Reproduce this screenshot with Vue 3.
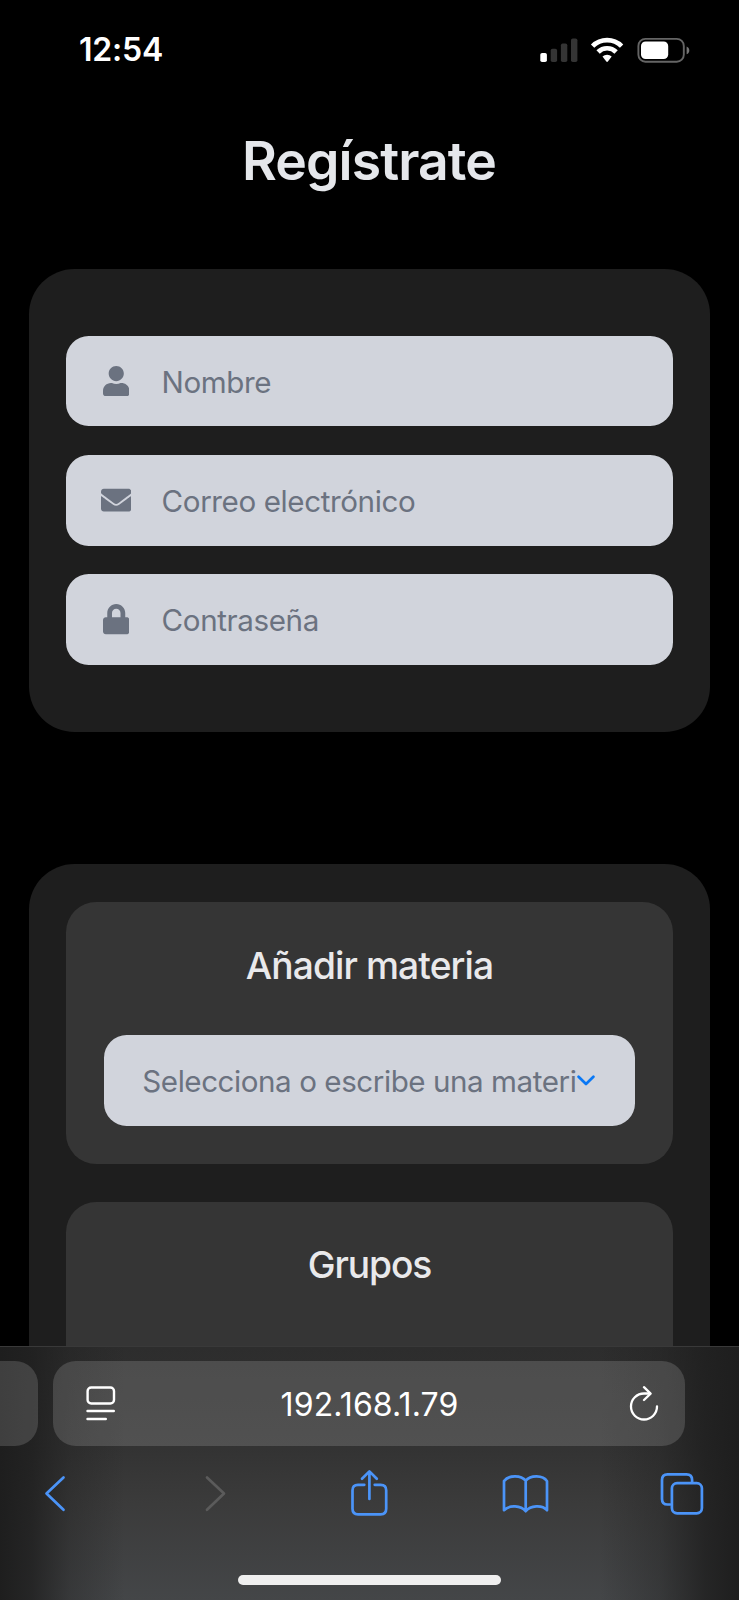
<script setup>
const fields = [
  {
    label: 'Nombre',
    width: 26.5,
    viewBox: '0 0 448 512',
    path: 'M224 256c70.7 0 128-57.3 128-128S294.7 0 224 0 96 57.3 96 128s57.3 128 128 128zm89.6 32h-16.7c-22.2 10.2-46.9 16-72.9 16s-50.6-5.8-72.9-16h-16.7C60.2 288 0 348.2 0 422.4V464c0 26.5 21.5 48 48 48h352c26.5 0 48-21.5 48-48v-41.6c0-74.2-60.2-134.4-134.4-134.4z',
  },
  {
    label: 'Correo electrónico',
    width: 30.3,
    viewBox: '0 0 512 512',
    path: 'M502.3 190.8c3.9-3.1 9.7-.2 9.7 4.7V400c0 26.5-21.5 48-48 48H48c-26.5 0-48-21.5-48-48V195.6c0-5 5.7-7.8 9.7-4.7 22.4 17.4 52.1 39.5 154.1 113.6 21.1 15.4 56.7 47.8 92.2 47.6 35.7.3 72-32.8 92.3-47.6 102-74.1 131.6-96.3 154-113.7zM256 320c23.2.4 56.6-29.2 73.4-41.4 132.7-96.3 142.8-104.7 173.4-128.7 5.8-4.5 9.2-11.5 9.2-18.9v-19c0-26.5-21.5-48-48-48H48c-26.5 0-48 21.5-48 48v19c0 7.4 3.4 14.3 9.2 18.9 30.6 23.9 40.7 32.4 173.4 128.7 16.8 12.2 50.2 41.8 73.4 41.4z',
  },
  {
    label: 'Contraseña',
    width: 26.5,
    viewBox: '0 0 448 512',
    path: 'M400 224h-24v-72C376 68.2 307.8 0 224 0S72 68.2 72 152v72H48c-26.5 0-48 21.5-48 48v192c0 26.5 21.5 48 48 48h352c26.5 0 48-21.5 48-48V272c0-26.5-21.5-48-48-48zm-104 0H152v-72c0-39.7 32.3-72 72-72s72 32.3 72 72v72z',
  },
]
</script>

<template>
  <div class="screen">
    <main class="content">
      <header class="status">
        <span class="time">12:54</span>
        <svg class="indicators" width="152" height="28" viewBox="0 0 152 28">
          <rect x="0.3" y="17" width="6.6" height="9" rx="1.8" fill="#fff" />
          <g fill="#343434">
            <rect x="10.7" y="12.8" width="6.4" height="13.2" rx="1.8" />
            <rect x="20.9" y="7.5" width="6.4" height="18.5" rx="1.8" />
            <rect x="31" y="2.5" width="6.4" height="23.5" rx="1.8" />
          </g>
          <g fill="none" stroke="#fff" stroke-width="4.7">
            <path d="M52.6 10.2A20.5 20.5 0 0 1 81.6 10.2" />
            <path d="M58.1 16A12.7 12.7 0 0 1 76.1 16" />
          </g>
          <path d="M62.5 20.5A6.6 6.6 0 0 1 71.7 20.5L67.9 25.5Q67.1 26.4 66.3 25.5Z" fill="#fff" />
          <rect x="98.4" y="2.9" width="45.4" height="22.8" rx="7" fill="none" stroke="#656565" stroke-width="1.9" />
          <rect x="101" y="5.5" width="27.2" height="17.6" rx="4.6" fill="#fff" />
          <path d="M146.6 10.4C150.2 11.7 150.2 17 146.6 18.3Z" fill="#757575" />
        </svg>
      </header>

      <h1 class="title"><span>Regístrate</span></h1>

      <section class="card account">
        <div v-for="field in fields" :key="field.label" class="field">
          <span class="icon">
            <svg :width="field.width" height="30.3" :viewBox="field.viewBox">
              <path :d="field.path" fill="#6b7280" />
            </svg>
          </span>
          <span class="hint">{{ field.label }}</span>
        </div>
      </section>

      <section class="card subjects">
        <div class="panel">
          <h2 class="heading"><span>Añadir materia</span></h2>
          <div class="field select">
            <span class="hint clipped">Selecciona o escribe una materia</span>
            <svg width="18" height="12" viewBox="0 0 18 12">
              <path d="M1.6 1.8L9 9L16.4 1.8" fill="none" stroke="#0a78f5" stroke-width="2.7" stroke-linecap="round" stroke-linejoin="round" />
            </svg>
          </div>
        </div>
        <div class="panel groups">
          <h2 class="heading"><span class="group-title">Grupos</span></h2>
        </div>
      </section>
    </main>

    <footer class="browser">
      <div class="tabs">
        <div class="previous"></div>
        <div class="address">
          <svg class="reader" width="30" height="36" viewBox="0 0 30 36" fill="none" stroke="#fff" stroke-width="2.4" stroke-linecap="round">
            <rect x="1.6" y="1.5" width="26.4" height="16" rx="3.6" />
            <path d="M1.5 25H27.8M1.5 33H19.8" />
          </svg>
          <span class="url">192.168.1.79</span>
          <svg width="30" height="36" viewBox="0 0 30 36" fill="none" stroke="#fff" stroke-width="2.3" stroke-linecap="round" stroke-linejoin="round">
            <path d="M28 20.5A13 13 0 1 1 15 7.5H21" />
            <path d="M15 1.2L21.6 7.6L15 14" />
          </svg>
        </div>
      </div>

      <nav class="tools">
        <svg viewBox="0 0 48 52">
          <path d="M32.5 11.4L15.5 27.6L32.5 43.8" />
        </svg>
        <svg class="disabled" viewBox="0 0 48 52">
          <path d="M20 11.4L37 27.6L20 43.8" />
        </svg>
        <svg viewBox="0 0 48 52">
          <path d="M20.3 18.8H14Q8.5 18.8 8.5 24.3V42.8Q8.5 48.3 14 48.3H36.7Q42.2 48.3 42.2 42.8V24.3Q42.2 18.8 36.7 18.8H30.7" />
          <path d="M25.4 33V6M18 12.8L25.4 5.4L32.8 12.8" />
        </svg>
        <svg viewBox="0 0 48 52">
          <path d="M24.7 14.6C20 8.8 7.5 8.8 3 15.1V44.2C8.5 38.5 20 39.5 24.7 45.2C29.4 39.5 41 38.5 46 44.2V15.1C42 8.8 29.4 8.8 24.7 14.6V44.5" />
        </svg>
        <svg viewBox="0 0 48 52">
          <path d="M12 38.5H9.6Q4 38.5 4 32.9V13.9Q4 8.3 9.6 8.3H28.5Q34.1 8.3 34.1 13.9V16" />
          <rect x="13.9" y="17.1" width="30" height="30.2" rx="5.2" />
        </svg>
      </nav>

      <div class="home"></div>
    </footer>
  </div>
</template>

<style>
body {
  background: #000;
}
</style>

<style scoped>
.screen {
  display: flex;
  flex-direction: column;
  width: 739px;
  height: 1600px;
  overflow: hidden;
  background: #000;
  color: #e5e7eb;
  font-family: Inter, "Liberation Sans", sans-serif;
  white-space: nowrap;
}

.content {
  height: 1346px;
  overflow: hidden;
}

.status {
  display: flex;
  justify-content: space-between;
  align-items: center;
  height: 99px;
  padding: 0 47px 0 79px;
}

.time {
  color: #fff;
  font-size: 32px;
  font-weight: 600;
  letter-spacing: -0.2px;
}

.indicators {
  display: block;
}

.title {
  display: flex;
  justify-content: center;
  align-items: center;
  height: 123px;
  margin: 0 0 47px;
  padding-right: 1px;
  color: #e5e7eb;
  font-size: 53.5px;
  font-weight: 600;
  letter-spacing: -0.9px;
}

.card {
  box-sizing: border-box;
  width: 681px;
  margin-left: 29px;
  background: #1e1e1e;
  border-radius: 45.5px;
}

.account {
  display: flex;
  flex-direction: column;
  gap: 28.4px;
  height: 462.6px;
  padding: 66.6px 37.3px;
}

.field {
  box-sizing: border-box;
  display: flex;
  align-items: center;
  height: 91px;
  padding-left: 30.8px;
  background: #d1d4dc;
  border-radius: 22.7px;
}

.icon {
  display: flex;
  justify-content: center;
  width: 38px;
  margin-right: 26.5px;
}

.icon svg {
  display: block;
}

.hint {
  padding-top: 1px;
  color: #6b7280;
  font-size: 29.6px;
  line-height: 42px;
  letter-spacing: -0.4px;
}

.subjects {
  height: 600px;
  margin-top: 132.7px;
  padding: 37.8px 37.3px;
}

.panel {
  box-sizing: border-box;
  height: 261.8px;
  padding: 38px;
  background: #353535;
  border-radius: 30.3px;
}

.groups {
  margin-top: 38px;
}

.heading {
  display: flex;
  justify-content: center;
  align-items: center;
  height: 50px;
  margin: 0 0 45px;
  color: #e9e9eb;
  font-size: 37.2px;
  font-weight: 500;
  letter-spacing: -0.9px;
}

.group-title {
  letter-spacing: -1.1px;
}

.select {
  padding-left: 38px;
}

.clipped {
  width: 434.5px;
  padding-top: 0;
  overflow: hidden;
  letter-spacing: -0.45px;
}

.browser {
  box-sizing: border-box;
  height: 254px;
  padding-top: 14px;
  border-top: 1px solid #393939;
  background:
    linear-gradient(90deg, #1e1e1e 0, #1e1e1ecc 32px, #1e1e1e55 70px, #1e1e1e00 125px, #1e1e1e00 600px, #1e1e1e55 660px, #1e1e1ecc 705px, #1e1e1e 739px),
    linear-gradient(#2d2d2d 0, #333 40%, #3b3b3b 62%, #444648 100%);
}

.tabs {
  display: flex;
  gap: 15px;
  height: 85px;
}

.previous {
  width: 38px;
  background: #ffffff26;
  border-radius: 0 23px 23px 0;
}

.address {
  box-sizing: border-box;
  display: flex;
  justify-content: space-between;
  align-items: center;
  width: 632px;
  padding: 0 26px 0 33px;
  background: #ffffff26;
  border-radius: 23px;
}

.reader {
  margin-top: 1px;
}

.url {
  margin-right: 6px;
  padding-top: 1px;
  color: #fff;
  font-size: 32px;
  letter-spacing: 0.1px;
}

.tools {
  display: flex;
  justify-content: space-between;
  height: 52px;
  margin-top: 20px;
  padding: 0 33px 0 30.5px;
}

.tools svg {
  width: 48px;
  height: 52px;
  fill: none;
  stroke: #4b94f8;
  stroke-width: 2.7;
  stroke-linecap: round;
  stroke-linejoin: round;
}

.tools .disabled {
  stroke: #5b5b5b;
}

.home {
  width: 263.5px;
  height: 10px;
  margin: 57px auto 0;
  background: #efefef;
  border-radius: 5px;
}
</style>
